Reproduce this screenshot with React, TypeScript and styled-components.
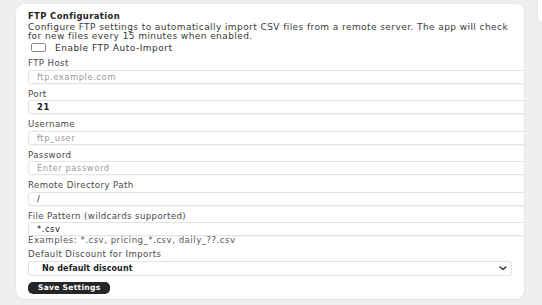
import styled, { createGlobalStyle } from "styled-components";

const GlobalStyle = createGlobalStyle`
  html, body {
    margin: 0;
    padding: 0;
    background: #efefef;
    overflow: hidden;
  }
  body {
    font-family: "DejaVu Sans", "Liberation Sans", sans-serif;
    color: #333;
  }
`;

const Page = styled.div`
  display: flex;
  align-items: flex-start;
  gap: 13px;
  padding-left: 16px;
  width: 542px;
  height: 305px;
  box-sizing: border-box;
  overflow: hidden;
`;

const Card = styled.section`
  flex: 0 0 508px;
  margin-top: 4px;
  box-sizing: border-box;
  background: #fff;
  border-radius: 8px;
  box-shadow: 0 0 1px rgba(0, 0, 0, 0.12), 0 1px 2px rgba(0, 0, 0, 0.05);
  padding: 7px 12px 5px 12px;
  overflow: hidden;
`;

const SidePanel = styled.div`
  flex: 0 0 24px;
  margin-top: -10px;
  height: 31px;
  background: #fff;
  border: 1px solid #e2e2e2;
  border-radius: 0 0 0 5px;
`;

const Title = styled.h3`
  margin: 0;
  font-size: 8.4px;
  line-height: 11px;
  letter-spacing: 0.4px;
  font-weight: bold;
  color: #222;
`;

const Description = styled.p`
  margin: 1px 0 0;
  font-size: 9px;
  line-height: 8.5px;
  letter-spacing: 0.42px;
  color: #3a3a3a;
`;

const CheckRow = styled.label`
  display: flex;
  align-items: center;
  gap: 9px;
  margin-top: 2px;
  height: 11px;
  font-size: 9px;
  letter-spacing: 0.5px;
  color: #333;
`;

const CheckBox = styled.input`
  appearance: none;
  margin: 0 0 0 3px;
  width: 15px;
  height: 9px;
  border: 1px solid #8a8a8a;
  border-radius: 2px;
  background: #fff;
  box-sizing: border-box;
`;

const Field = styled.div`
  display: flex;
  flex-direction: column;
  margin-top: 5px;
`;

const Label = styled.label`
  display: block;
  height: 10px;
  font-size: 8.6px;
  line-height: 10px;
  letter-spacing: 0.4px;
  color: #474747;
  margin-bottom: 1.5px;
`;

const Input = styled.input<{ bold?: boolean }>`
  display: block;
  width: calc(100% + 24px);
  height: 14px;
  box-sizing: border-box;
  border: 1px solid #e4e4e4;
  border-radius: 3px;
  box-shadow: 0 1px 0 rgba(0, 0, 0, 0.03);
  background: #fff;
  padding: 0 8px;
  margin: 0;
  font-family: inherit;
  font-size: 8.4px;
  letter-spacing: 0.55px;
  color: #222;
  font-weight: ${(p) => (p.bold ? "bold" : "normal")};
  outline: none;
  &::placeholder {
    color: #9a9a9a;
  }
`;

const Hint = styled.div`
  height: 8px;
  font-size: 8.6px;
  line-height: 8px;
  letter-spacing: 0.5px;
  color: #555;
`;

const SelectWrap = styled.div`
  position: relative;
  height: 15px;
`;

const Select = styled.select`
  appearance: none;
  display: block;
  width: 100%;
  height: 15px;
  box-sizing: border-box;
  border: 1px solid #e2e2e2;
  border-radius: 3px;
  background: #fff;
  padding: 0 13px;
  margin: 0;
  font-family: inherit;
  font-size: 8px;
  letter-spacing: 0.1px;
  font-weight: bold;
  color: #222;
  outline: none;
`;

const Chevron = styled.svg`
  position: absolute;
  right: 5px;
  top: 5px;
  pointer-events: none;
`;

const SaveButton = styled.button`
  display: block;
  margin-top: 6px;
  height: 12px;
  padding: 0 10px;
  border: none;
  border-radius: 5px;
  background: #262626;
  color: #fff;
  font-family: inherit;
  font-size: 7.6px;
  letter-spacing: 0.25px;
  font-weight: bold;
  line-height: 12px;
  cursor: pointer;
`;

const fields = [
  { label: "FTP Host", placeholder: "ftp.example.com", value: "" },
  { label: "Port", placeholder: "", value: "21", bold: true },
  { label: "Username", placeholder: "ftp_user", value: "" },
  { label: "Password", placeholder: "Enter password", value: "", type: "password" },
  { label: "Remote Directory Path", placeholder: "", value: "/" },
];

export default function App() {
  return (
    <>
      <GlobalStyle />
      <Page>
        <Card>
          <Title>FTP Configuration</Title>
          <Description>
            Configure FTP settings to automatically import CSV files from a remote server. The app will check
            for new files every 15 minutes when enabled.
          </Description>
          <CheckRow>
            <CheckBox type="checkbox" />
            Enable FTP Auto-Import
          </CheckRow>

          {fields.map((f) => (
            <Field key={f.label}>
              <Label>{f.label}</Label>
              <Input
                type={f.type ?? "text"}
                placeholder={f.placeholder}
                defaultValue={f.value}
                bold={f.bold}
              />
            </Field>
          ))}

          <Field>
            <Label>File Pattern (wildcards supported)</Label>
            <Input defaultValue="*.csv" />
            <Hint>Examples: *.csv, pricing_*.csv, daily_??.csv</Hint>
          </Field>

          <Field>
            <Label>Default Discount for Imports</Label>
            <SelectWrap>
              <Select defaultValue="">
                <option value="">No default discount</option>
              </Select>
              <Chevron width="8" height="5" viewBox="0 0 8 5">
                <path d="M1 1l3 2.5L7 1" fill="none" stroke="#222" strokeWidth="1.3" strokeLinecap="round" />
              </Chevron>
            </SelectWrap>
          </Field>

          <SaveButton>Save Settings</SaveButton>
        </Card>
        <SidePanel />
      </Page>
    </>
  );
}
